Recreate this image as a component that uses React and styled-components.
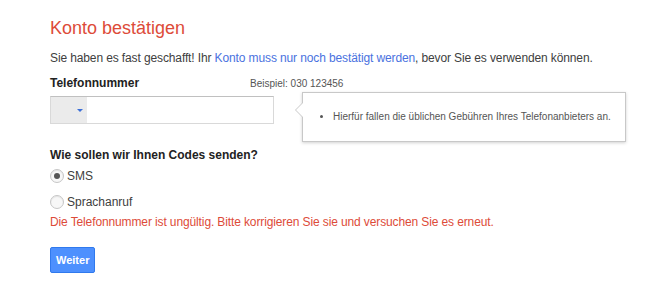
import React, { useState } from "react";
import styled, { createGlobalStyle } from "styled-components";

const GlobalStyle = createGlobalStyle`
  html, body {
    margin: 0;
    padding: 0;
    background: #fff;
  }
  body {
    font-family: "Liberation Sans", Arial, sans-serif;
    color: #404040;
  }
`;

const App = () => {
  const [method, setMethod] = useState("sms");

  return (
    <Page>
      <GlobalStyle />
      <Title>Konto bestätigen</Title>
      <Intro>
        Sie haben es fast geschafft! Ihr <Link>Konto muss nur noch bestätigt werden</Link>, bevor Sie es verwenden können.
      </Intro>

      <LabelRow>
        <Label>Telefonnummer</Label>
        <Hint>Beispiel: 030 123456</Hint>
      </LabelRow>

      <InputRow>
        <PhoneField>
          <CountryPicker>
            <Caret />
          </CountryPicker>
          <PhoneInput type="tel" />
        </PhoneField>
        <Bubble>
          <BubbleList>
            <li>Hierfür fallen die üblichen Gebühren Ihres Telefonanbieters an.</li>
          </BubbleList>
        </Bubble>
      </InputRow>

      <Question>Wie sollen wir Ihnen Codes senden?</Question>
      <Options>
        <Option onClick={() => setMethod("sms")}>
          <Radio checked={method === "sms"} />
          SMS
        </Option>
        <Option onClick={() => setMethod("voice")}>
          <Radio checked={method === "voice"} />
          Sprachanruf
        </Option>
      </Options>
      <Error>Die Telefonnummer ist ungültig. Bitte korrigieren Sie sie und versuchen Sie es erneut.</Error>

      <Button>Weiter</Button>
    </Page>
  );
};

export default App;

const Page = styled.div`
  width: 650px;
  height: 298px;
  box-sizing: border-box;
  padding: 15px 0 0 50px;
  overflow: hidden;
`;

const Title = styled.h1`
  margin: 0;
  font-size: 18px;
  line-height: 26px;
  font-weight: normal;
  color: #dd4b39;
`;

const Intro = styled.p`
  margin: 9px 0 0;
  font-size: 12px;
  line-height: 16px;
  letter-spacing: -0.12px;
  color: #404040;
  white-space: nowrap;
`;

const Link = styled.span`
  color: #4a72e0;
`;

const LabelRow = styled.div`
  display: flex;
  align-items: baseline;
  margin-top: 9px;
`;

const Label = styled.div`
  width: 200px;
  font-size: 12px;
  line-height: 16px;
  font-weight: bold;
  color: #222;
`;

const Hint = styled.div`
  font-size: 10px;
  color: #555;
`;

const InputRow = styled.div`
  display: flex;
  align-items: flex-start;
  margin-top: 5px;
`;

const PhoneField = styled.div`
  display: flex;
  width: 224px;
  height: 28px;
  box-sizing: border-box;
  border: 1px solid #d9d9d9;
  border-top-color: #c0c0c0;
`;

const CountryPicker = styled.div`
  width: 36px;
  box-sizing: border-box;
  background: #ebebeb;
  display: flex;
  align-items: center;
  justify-content: flex-end;
  padding-right: 4px;
`;

const Caret = styled.span`
  width: 0;
  height: 0;
  border-left: 3px solid transparent;
  border-right: 3px solid transparent;
  border-top: 3px solid #3b6fd8;
`;

const PhoneInput = styled.input`
  flex: 1;
  min-width: 0;
  border: none;
  outline: none;
  font-family: inherit;
  font-size: 12px;
  padding: 0 8px;
  background: #fff;
`;

const Bubble = styled.div`
  position: relative;
  margin: -4px 0 0 28px;
  width: 324px;
  height: 50px;
  box-sizing: border-box;
  border: 1px solid #c8c8c8;
  background: #fff;
  box-shadow: 0 1px 3px rgba(0, 0, 0, 0.18);
  display: flex;
  align-items: center;

  &::before,
  &::after {
    content: "";
    position: absolute;
    top: 9px;
    width: 0;
    height: 0;
    border-top: 8px solid transparent;
    border-bottom: 8px solid transparent;
  }
  &::before {
    left: -8px;
    border-right: 8px solid #c8c8c8;
  }
  &::after {
    left: -7px;
    border-right: 8px solid #fff;
  }
`;

const BubbleList = styled.ul`
  margin: 0;
  padding: 0 0 0 30px;
  font-size: 10px;
  line-height: 14px;
  color: #555;
  white-space: nowrap;

  li {
    margin: 0;
  }
`;

const Question = styled.div`
  margin-top: 5px;
  font-size: 12px;
  line-height: 16px;
  font-weight: bold;
  color: #222;
`;

const Options = styled.div`
  display: flex;
  flex-direction: column;
  gap: 10px;
  margin-top: 5px;
`;

const Option = styled.label`
  display: flex;
  align-items: center;
  gap: 3px;
  font-size: 12px;
  line-height: 16px;
  color: #404040;
  cursor: pointer;
`;

const Radio = styled.span`
  width: 14px;
  height: 14px;
  box-sizing: border-box;
  border-radius: 50%;
  border: 1px solid #c6c6c6;
  background: #f7f7f7;
  box-shadow: inset 0 1px 1px rgba(0, 0, 0, 0.08);
  display: flex;
  align-items: center;
  justify-content: center;

  &::after {
    content: "";
    width: 6px;
    height: 6px;
    border-radius: 50%;
    background: ${(props) => (props.checked ? "#555" : "transparent")};
  }
`;

const Error = styled.div`
  margin-top: 4px;
  font-size: 12px;
  line-height: 16px;
  letter-spacing: -0.12px;
  color: #dd4b39;
`;

const Button = styled.button`
  display: block;
  margin-top: 17px;
  height: 26px;
  padding: 0 5px;
  border: 1px solid #3079ed;
  border-radius: 2px;
  background: #4d90fe;
  color: #fff;
  font-family: inherit;
  font-size: 11px;
  font-weight: bold;
  cursor: pointer;
`;
